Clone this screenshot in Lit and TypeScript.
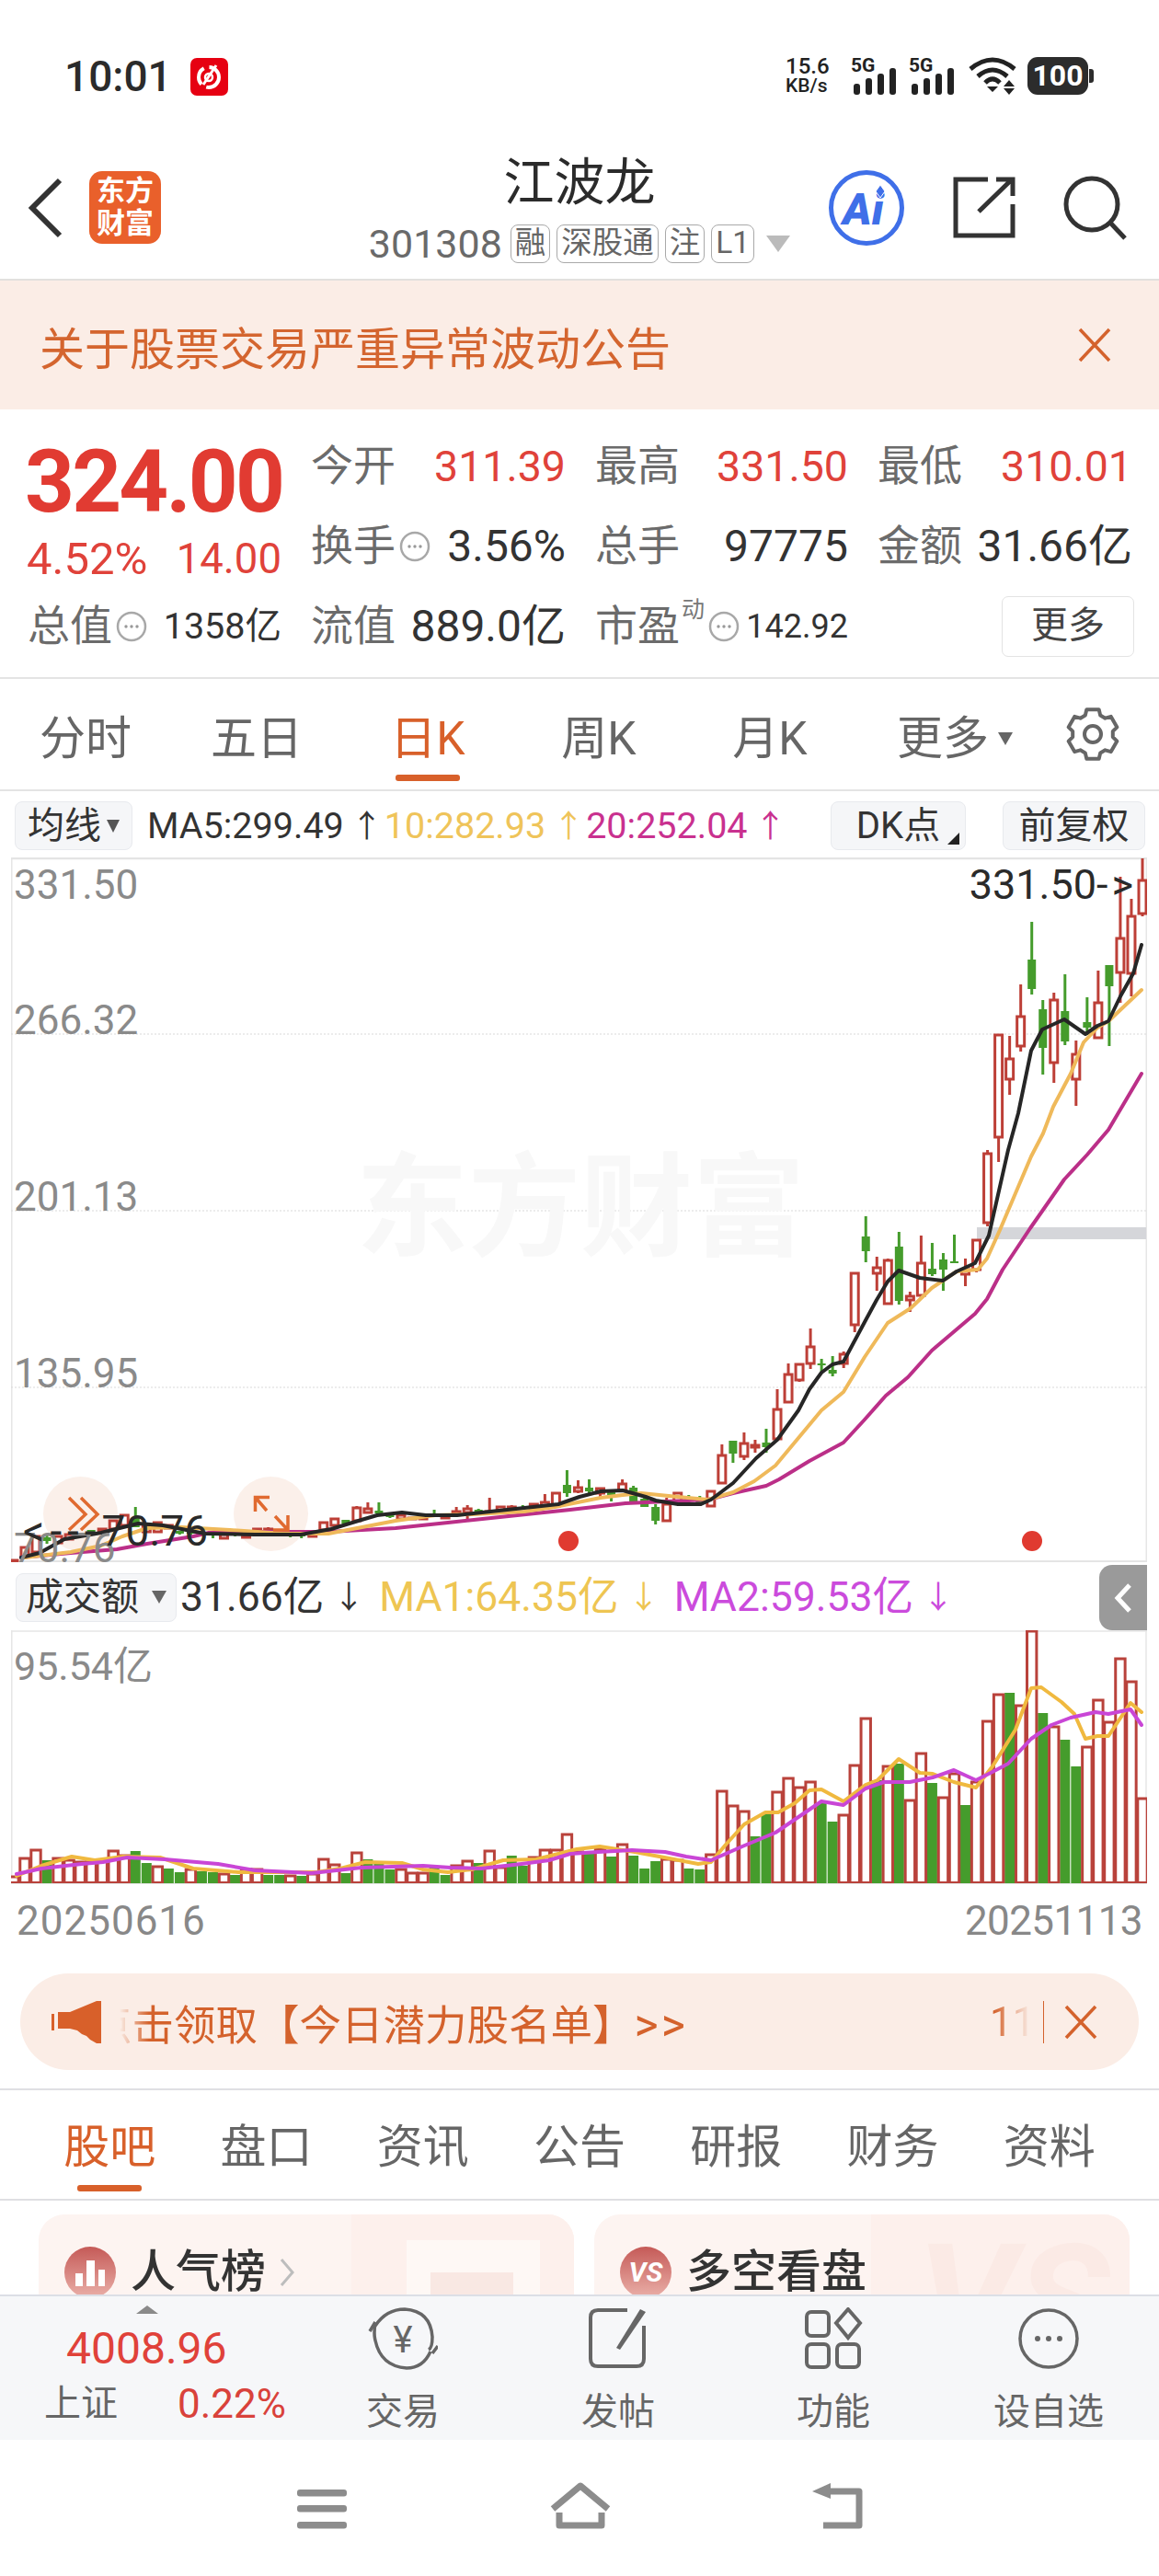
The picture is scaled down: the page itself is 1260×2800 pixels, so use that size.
// Stock detail page: quote header, K-line and volume charts, bottom bars.
import { LitElement, html, css, svg } from 'lit';
import { customElement } from 'lit/decorators.js';

type Candle = [number, number, number?, number?, string?];

// chart data is in page pixels, k = 0 is the newest day
const CANDLES: Candle[] = [
  [957, 993, 933, 996], [996, 1058, 977, 1083], [1020, 1057, 953, 1090], [1049, 1072, 1049, 1137, 'g'],
  [1090, 1128, 1055, 1128], [1111, 1117, 1084, 1125, 'g'], [1146, 1173, 1131, 1202], [1099, 1132, 1059, 1136, 'g'],
  [1087, 1155, 1079, 1177], [1097, 1139, 1087, 1168, 'g'], [1043, 1075, 1002, 1081, 'g'], [1105, 1137, 1070, 1143],
  [1151, 1173, 1126, 1190], [1125, 1236, 1125, 1263], [1254, 1329, 1250, 1333], [1348, 1380, 1348, 1383],
  [1380, 1385, 1368, 1398], [1371, 1373, 1342, 1373, 'g'], [1369, 1380, 1362, 1403, 'g'], [1379, 1385, 1351, 1387, 'g'],
  [1373, 1408, 1343, 1412], [1409, 1413, 1404, 1426], [1355, 1414, 1339, 1418, 'g'], [1370, 1417, 1368, 1417],
  [1378, 1384, 1366, 1403], [1344, 1360, 1322, 1372, 'g'], [1384, 1440, 1384, 1448], [1472, 1482, 1469, 1487],
  [1489, 1493, 1474, 1496, 'g'], [1482, 1484, 1477, 1491, 'g'], [1464, 1482, 1444, 1488], [1483, 1500, 1483, 1502],
  [1494, 1524, 1482, 1524], [1532, 1564, 1510, 1565], [1568, 1573, 1553, 1579, 'g'], [1571, 1573, 1565, 1579],
  [1569, 1583, 1557, 1587], [1566, 1580, 1566, 1590, 'g'], [1582, 1612, 1570, 1613], [1621, 1637],
  [1630, 1635, 1626, 1637, 'g'], [1627, 1631, 1625, 1635, 'g'], [1623, 1633], [1635, 1653, 1628, 1653],
  [1638, 1653, 1635, 1657, 'g'], [1629, 1638, 1625, 1638, 'g'], [1617, 1632, 1615, 1633, 'g'], [1613, 1620, 1608, 1621],
  [1622, 1627, 1620, 1632, 'g'], [1618, 1623, 1617, 1627], [1617, 1621, 1608, 1623, 'g'], [1617, 1621, 1609, 1623],
  [1614, 1623, 1598, 1627, 'g'], [1623, 1637], [1633, 1638, 1624, 1638], [1635, 1640],
  [1638, 1640, 1636, 1641, 'g'], [1638, 1642, 1636, 1642], [1638, 1643], [1643, 1644, 1628, 1645],
  [1641, 1644, 1640, 1645, 'g'], [1640, 1644, 1636, 1651], [1643, 1646, 1638, 1646], [1647, 1650],
  [1646, 1647, 1641, 1649, 'g'], [1650, 1651], [1650, 1651], [1647, 1651],
  [1646, 1649, 1646, 1650, 'g'], [1642, 1645, 1633, 1647, 'g'], [1640, 1644, 1633, 1645], [1639, 1653, 1637, 1653],
  [1652, 1656, 1652, 1658, 'g'], [1651, 1658], [1655, 1663], [1668, 1670],
  [1668, 1670, 1668, 1672, 'g'], [1668, 1670, 1668, 1671, 'g'], [1667, 1669, 1667, 1670, 'g'], [1662, 1666, 1660, 1666],
  [1662, 1665], [1668, 1671], [1667, 1669, 1667, 1670, 'g'], [1668, 1672],
  [1667, 1669, 1667, 1672, 'g'], [1665, 1667, 1665, 1668, 'g'], [1664, 1667, 1664, 1670, 'g'], [1664, 1667, 1664, 1668, 'g'],
  [1658, 1661], [1655, 1665], [1658, 1665], [1650, 1660, 1638, 1660, 'g'],
  [1647, 1658], [1653, 1662], [1662, 1664], [1663, 1665, 1663, 1666, 'g'],
  [1666, 1668, 1666, 1669, 'g'], [1668, 1673], [1670, 1677], [1671, 1675, 1668, 1678, 'g'],
  [1670, 1687], [1682, 1692], [1696, 1699],
];

const VOLUMES: [number, string?][] = [
  [1955], [1828], [1803], [1872], [1848], [1899], [1920, 'g'], [1891, 'g'], [1877], [1862, 'g'],
  [1773], [1854], [1840, 'g'], [1842], [1871], [1937], [1962, 'g'], [1928], [1954], [1938, 'g'],
  [1906], [1957], [1917, 'g'], [1920], [1935, 'g'], [1868], [1919], [1973], [1980, 'g'], [1960, 'g'],
  [1937], [1943], [1933], [1948], [1972, 'g'], [1996, 'g'], [1969], [1963], [1947], [2016],
  [2032, 'g'], [2031, 'g'], [2022], [2021], [2023, 'g'], [2031, 'g'], [2017, 'g'], [2005], [2018, 'g'], [2010],
  [2012, 'g'], [2013], [1994], [2011], [2011], [2019], [2028, 'g'], [2017, 'g'], [2030], [2012],
  [2025, 'g'], [2023], [2028], [2038, 'g'], [2030, 'g'], [2036], [2036], [2032], [2032, 'g'], [2026, 'g'],
  [2021, 'g'], [2014], [2036, 'g'], [2027], [2021], [2037], [2039, 'g'], [2039], [2038, 'g'], [2038, 'g'],
  [2032], [2032], [2038, 'g'], [2037], [2035, 'g'], [2034, 'g'], [2032], [2035, 'g'], [2031, 'g'], [2029],
  [2025, 'g'], [2012, 'g'], [2017], [2012], [2022], [2024], [2024], [2022], [2020], [2022, 'g'],
  [2011], [2020], [2040],
];

const MA5 = '23,1693 43,1688 70,1673 110,1666 150,1656 177,1658 223,1667 277,1668 327,1668 360,1662 393,1652 410,1647 437,1644 463,1647 497,1647 533,1643 570,1639 607,1635 630,1627 653,1621 677,1620 702,1627 713,1631 737,1635 762,1635 773,1630 797,1612 822,1585 845,1565 868,1533 880,1510 893,1492 905,1483 917,1480 940,1437 953,1413 965,1393 977,1381 1000,1389 1025,1392 1040,1382 1060,1373 1075,1343 1096,1250 1107,1210 1121,1142 1133,1119 1157,1108 1180,1124 1193,1115 1205,1110 1218,1083 1232,1058 1241,1027';
const MA10 = '27,1693 77,1687 110,1680 133,1670 160,1661 197,1660 250,1663 310,1667 357,1667 430,1653 473,1647 513,1646 570,1643 603,1638 653,1628 677,1625 697,1623 737,1627 770,1630 797,1622 820,1610 843,1593 868,1563 893,1533 917,1513 940,1475 965,1438 990,1422 1013,1400 1040,1382 1063,1380 1073,1368 1087,1337 1104,1297 1121,1257 1134,1232 1145,1203 1164,1167 1178,1133 1193,1117 1205,1110 1241,1076';
const MA20 = '23,1693 77,1688 127,1684 160,1678 210,1670 227,1666 277,1665 357,1665 430,1661 487,1655 553,1648 620,1641 680,1634 703,1633 770,1630 797,1623 833,1615 847,1608 880,1588 917,1568 940,1543 963,1517 987,1497 1013,1468 1060,1428 1073,1412 1090,1380 1120,1335 1134,1315 1157,1282 1182,1255 1205,1228 1241,1167';
const VMA1 = '18,2039 45,2028 78,2018 103,2022 134,2018 174,2019 210,2031 259,2035 312,2035 344,2035 370,2031 397,2024 437,2025 460,2032 487,2035 513,2032 547,2022 583,2021 627,2010 652,2007 690,2013 733,2021 759,2026 773,2024 789,2005 809,1983 832,1970 846,1970 864,1960 880,1946 893,1945 917,1958 941,1940 954,1935 977,1912 1000,1927 1014,1928 1037,1937 1061,1943 1079,1920 1104,1880 1121,1835 1132,1834 1154,1850 1168,1863 1180,1890 1193,1887 1205,1887 1229,1851 1241,1861';
const VMA2 = '18,2037 45,2031 89,2026 112,2024 138,2019 179,2021 237,2026 277,2033 339,2036 393,2030 460,2028 490,2030 523,2031 567,2026 597,2022 620,2015 650,2013 687,2011 723,2013 746,2018 773,2022 807,2007 843,1992 871,1973 893,1958 917,1962 941,1944 961,1937 989,1937 1014,1932 1037,1924 1061,1935 1075,1928 1096,1917 1121,1890 1143,1875 1164,1867 1191,1861 1205,1863 1229,1858 1241,1875';

const RED = '#bd3f37';
const GREEN = '#459c2c';
const xOf = (k: number) => 1242 - 12.03 * k;

// six rounded teeth around the centre of a 60 box
const gearPath = () => {
  const pts: string[] = [];
  for (let i = 0; i < 6; i++) {
    const a = (-90 + i * 60) * (Math.PI / 180);
    for (const [off, r] of [[-14, 27.5], [14, 27.5], [22, 22], [38, 22]]) {
      const t = a + (off * Math.PI) / 180;
      pts.push(`${(30 + r * Math.cos(t)).toFixed(1)} ${(30 + r * Math.sin(t)).toFixed(1)}`);
    }
  }
  return `M${pts.join(' L')} Z`;
};

const info = () => html`<svg class="info" width="34" height="34" viewBox="0 0 34 34">
  <circle cx="17" cy="17" r="15" fill="none" stroke="#a8a8a8" stroke-width="2.5" />
  <circle cx="11" cy="17" r="1.7" fill="#999" /><circle cx="17" cy="17" r="1.7" fill="#999" /><circle cx="23" cy="17" r="1.7" fill="#999" />
</svg>`;

const signal = () => html`<svg width="48" height="29" viewBox="0 0 48 29">
  <rect x="1" y="17" width="7" height="12" rx="3" fill="#222" /><rect x="14" y="11" width="7" height="18" rx="3" fill="#222" />
  <rect x="27" y="6" width="7" height="23" rx="3" fill="#222" /><rect x="40" y="0" width="7" height="29" rx="3" fill="#222" />
</svg>`;

const closeX = () => html`<svg class="x" width="38" height="38" viewBox="0 0 38 38">
  <path d="M3 2 L35 36 M35 2 L3 36" stroke="#d4622c" stroke-width="3.5" fill="none" />
</svg>`;

@customElement('app-root')
export class AppRoot extends LitElement {
  static override styles = css`
    :host {
      display: block;
      width: 1260px;
      height: 2800px;
      overflow: hidden;
      background: #fff;
      color: #333;
      font-family: Roboto, 'Noto Sans CJK SC', sans-serif;
    }
    svg { display: block; flex: none; }

    .status { height: 150px; display: flex; justify-content: space-between; align-items: flex-start; padding: 62px 77px 0 70px; box-sizing: border-box; }
    .status-left { display: flex; align-items: center; gap: 20px; }
    .time { font-size: 46px; line-height: 42px; font-weight: 500; color: #2b2b2b; }
    .status-right { display: flex; align-items: flex-start; }
    .speed { width: 62px; font-size: 21px; line-height: 21px; font-weight: 500; color: #222; text-align: left; }
    .speed b { display: block; font-size: 24px; font-weight: 500; }
    .net { position: relative; width: 63px; height: 41px; display: flex; align-items: flex-end; margin-left: 11px; }
    .net span { position: absolute; left: -2px; top: -1px; font-size: 21px; line-height: 21px; font-weight: 700; color: #222; }
    .net + .net { margin-left: 0; }
    .battery { position: relative; width: 66px; height: 41px; margin-left: 12px; border-radius: 11px; background: #2c2c2c; color: #fff; font-size: 32px; line-height: 41px; font-weight: 700; text-align: center; }
    .battery::after { content: ''; position: absolute; right: -6px; top: 13px; width: 5px; height: 15px; border-radius: 0 3px 3px 0; background: #2c2c2c; }

    .header { height: 155px; box-sizing: border-box; border-bottom: 2px solid #e2e0de; display: grid; grid-template-columns: 1fr 460px 1fr; align-items: flex-start; }
    .h-left { display: flex; align-items: center; padding: 36px 0 0 30px; gap: 27px; }
    .logo { width: 78px; height: 79px; border-radius: 14px; background: #e9602b; color: #fff; font-size: 31px; line-height: 35px; font-weight: 700; text-align: center; padding-top: 4px; box-sizing: border-box; }
    .h-center { display: flex; flex-direction: column; align-items: center; padding-top: 17px; }
    .title { font-size: 55px; line-height: 62px; color: #2b2b2b; }
    .sub { display: flex; align-items: center; gap: 7px; margin-top: 14px; font-size: 43px; line-height: 44px; color: #6a6a6a; }
    .tag { height: 42px; box-sizing: border-box; border: 1.5px solid #a9a9a9; border-radius: 8px; padding: 0 4px; font-size: 33.5px; line-height: 38px; color: #666; white-space: nowrap; }
    .sub .code { margin-right: 2px; }
    .sub svg { margin-left: 6px; }
    .h-right { display: flex; justify-content: flex-end; align-items: center; gap: 52px; padding: 34px 34px 0 0; }
    .h-right text { font: 900 italic 48px Roboto, sans-serif; fill: #3f6fe8; }

    .banner { height: 140px; background: #fbede6; display: flex; align-items: center; justify-content: space-between; padding: 0 51px 0 43px; font-size: 49px; color: #d4652f; }

    .quote { height: 293px; box-sizing: border-box; border-bottom: 2px solid #e4e4e4; padding: 18px 0 0 30px; display: grid; grid-template-columns: 276px 277px 275px 277px; column-gap: 32px; grid-template-rows: 87px 87px 87px; }
    .price { grid-row: 1 / span 2; display: flex; flex-direction: column; padding-top: 6px; }
    .big { font-size: 94px; line-height: 110px; font-weight: 700; color: #e13b32; letter-spacing: -2.8px; margin-left: -3px; white-space: nowrap; }
    .chg { display: flex; justify-content: space-between; align-items: center; margin-top: 5px; font-size: 45.5px; line-height: 48px; color: #e0423a; }
    .chg span:first-child { font-size: 49px; margin-left: -1px; }
    .cell { display: flex; align-items: center; justify-content: space-between; font-size: 48px; line-height: 54px; color: #333; }
    .lab { position: relative; top: -1px; color: #6b6b6b; font-size: 46px; white-space: nowrap; }
    .up { color: #e0423a; font-size: 46.5px; }
    .lab-wrap { display: flex; align-items: center; gap: 4px; }
    .small { font-size: 39.5px; }
    .tiny { font-size: 36px; }
    .sup { font-size: 25px; line-height: 25px; color: #777; align-self: flex-start; margin-left: -2px; position: relative; top: -4px; }
    .more { justify-self: end; align-self: center; width: 144px; height: 66px; box-sizing: border-box; border: 1.5px solid #e3e3e3; border-radius: 7px; font-size: 40px; line-height: 62px; text-align: center; color: #444; margin-right: -2px; }

    .ktabs { height: 122px; box-sizing: border-box; border-bottom: 2px solid #e4e4e4; display: grid; grid-template-columns: repeat(5, 186px) 216px 1fr; align-items: center; padding-top: 10px; font-size: 50px; color: #666; }
    .ktabs > div { position: relative; display: flex; justify-content: center; align-items: center; gap: 10px; line-height: 60px; }
    .ktabs .on { color: #d8602a; }
    .ktabs .on::after { content: ''; position: absolute; left: 58px; bottom: -16px; width: 70px; height: 7px; border-radius: 3px; background: #d8602a; }
    .ktabs .gear { justify-content: flex-start; padding-left: 12px; position: relative; top: -5px; }
    .tri { width: 0; height: 0; border-left: 8px solid transparent; border-right: 8px solid transparent; border-top: 14px solid #666; }

    .marow { height: 72px; display: flex; align-items: center; font-size: 39.5px; line-height: 50px; padding-top: 3px; box-sizing: border-box; color: #333; white-space: nowrap; }
    .pick { flex: none; height: 53px; box-sizing: border-box; border: 1.5px solid #e8eaee; border-radius: 8px; background: #f5f6f8; display: flex; align-items: center; justify-content: center; gap: 6px; color: #333; font-size: 40px; position: relative; }
    .arrow { flex: none; width: 24px; margin-left: 8px; font-size: 34px; text-align: center; }
    .volrow .arrow { width: 30px; margin-left: 10px; }
    .ma10, .ma10a { color: #efc45a; }
    .ma20, .ma20a { color: #c9318f; }
    .ma10, .ma20 { margin-left: 12px; }
    .pick.a { width: 128px; margin: 0 16px; }
    .pick.a .tri { border-top-color: #555; border-left-width: 7px; border-right-width: 7px; }
    .pick.dk { width: 147px; margin-left: auto; }
    .pick.dk::after { content: ''; position: absolute; right: 6px; bottom: 5px; border-left: 13px solid transparent; border-bottom: 13px solid #222; }
    .pick.fq { width: 155px; margin: 0 15px 0 40px; }

    .chart { position: relative; height: 766px; width: 1235px; margin-left: 12px; }
    .label { position: absolute; left: 3px; font-size: 44px; line-height: 44px; color: #8a8a8a; white-space: nowrap; }
    .label.dark { color: #2a2a2a; }
    .label.flow { font-size: 46px; left: 13px; }
    .label.end { left: auto; right: 11px; font-size: 45px; }
    .label.end i { font-style: normal; letter-spacing: 4px; }
    .dashes { letter-spacing: 6px; }
    .mark { position: absolute; left: 375px; top: 312px; font-size: 122px; line-height: 140px; font-weight: 700; color: #f8f8f8; white-space: nowrap; }

    .volrow { position: relative; height: 74px; display: flex; align-items: center; font-size: 44.5px; line-height: 50px; padding-top: 2px; box-sizing: border-box; white-space: nowrap; color: #333; }
    .pick.vol { width: 175px; height: 53px; margin: 0 4px 0 17px; font-size: 41px; gap: 14px; }
    .pick.vol .tri { border-top-color: #666; }
    .m1, .m1a { color: #eec552; }
    .m2, .m2a { color: #cb4bdc; }
    .m1 { margin-left: 20px; }
    .m2 { margin-left: 20px; }
    .side { position: absolute; right: 13px; top: 3px; width: 52px; height: 71px; border-radius: 14px 0 0 14px; background: #9a9a9a; display: flex; align-items: center; justify-content: center; }

    .volchart { position: relative; height: 276px; width: 1235px; margin-left: 12px; }
    .volchart .label { font-size: 43px; line-height: 43px; top: 18px; left: 3px; }
    .dates { height: 97px; display: flex; justify-content: space-between; padding: 15px 18px 0 18px; box-sizing: border-box; font-size: 44px; line-height: 50px; color: #888; }
    .dates span:first-child { letter-spacing: 1px; }
    .dates span:last-child { letter-spacing: -0.6px; }

    .promo { height: 105px; margin: 0 22px 20px; border-radius: 53px; background: #fbede6; display: flex; align-items: center; padding-left: 34px; color: #d4622c; font-size: 45.5px; }
    .scroll { width: 632px; margin-left: 20px; overflow: hidden; white-space: nowrap; -webkit-mask-image: linear-gradient(90deg, transparent, #000 32px); mask-image: linear-gradient(90deg, transparent, #000 32px); }
    .scroll span { display: inline-block; margin-left: -32px; }
    .scroll b { font-weight: 400; font-size: 50px; letter-spacing: 3px; }
    .count { width: 44px; margin-left: 314px; white-space: nowrap; overflow: hidden; font-size: 44px; -webkit-mask-image: linear-gradient(90deg, #000 10%, transparent); mask-image: linear-gradient(90deg, #000 10%, transparent); }
    .sep { width: 1px; height: 46px; background: #d4622c; margin-left: 14px; }
    .promo .x { margin-left: 21px; }

    .ptabs { height: 122px; box-sizing: border-box; border-top: 2px solid #dfdfe3; border-bottom: 2px solid #dfdfe3; display: grid; grid-template-columns: repeat(7, 1fr); padding: 0 34px; align-items: center; font-size: 50px; color: #666; text-align: center; }
    .ptabs div { position: relative; line-height: 60px; top: 3px; }
    .ptabs .on { color: #d8602a; }
    .ptabs .on::after { content: ''; position: absolute; left: 50px; bottom: -18px; width: 70px; height: 7px; border-radius: 3px; background: #d8602a; }

    .cards { height: 102px; overflow: hidden; display: flex; gap: 22px; padding: 15px 32px 0 42px; box-sizing: border-box; }
    .card { position: relative; flex: 1; height: 160px; overflow: hidden; border-radius: 28px 28px 0 0; background: #fdf4f1; }
    .card .head { position: relative; display: flex; align-items: center; padding: 33px 0 0 28px; font-size: 49px; line-height: 60px; font-weight: 500; color: #333; }
    .chev { margin-left: 14px; }
    .badge { width: 56px; height: 56px; border-radius: 50%; background: linear-gradient(#c55a57, #eab0a9); margin-right: 16px; color: #fff; font-size: 30px; line-height: 56px; font-weight: 700; font-style: italic; text-align: center; display: flex; align-items: center; justify-content: center; }
    .panel { position: absolute; top: 0; right: 0; bottom: 0; width: 242px; background: #fdf0ec; }
    .panel.wide { width: 281px; }
    .panel i { position: absolute; left: 60px; top: 28px; width: 145px; height: 100px; background: #fef8f5; }
    .panel b { position: absolute; left: 86px; top: 63px; width: 90px; height: 60px; background: #f9e8e3; }
    .bigvs { position: absolute; left: 50px; top: 10px; font-size: 170px; line-height: 170px; font-weight: 700; font-style: italic; color: #fbeae5; }

    .bar { height: 158px; box-sizing: border-box; background: #f6f7f9; border-top: 2px solid #dcdfe6; display: flex; }
    .index { position: relative; width: 321px; box-sizing: border-box; padding: 0 10px 0 48px; display: flex; flex-direction: column; }
    .index .tri { position: absolute; left: 148px; top: 10px; border-top: none; border-bottom: 9px solid #8a8a8a; border-left-width: 12px; border-right-width: 12px; }
    .idx { margin-top: 32px; padding-left: 24px; font-size: 48px; line-height: 50px; color: #e0423a; }
    .idx-row { display: flex; justify-content: space-between; align-items: center; margin-top: 10px; font-size: 40px; line-height: 50px; color: #666; }
    .idx-row span:last-child { color: #d9423b; font-size: 44px; }
    .tool { width: 234px; display: flex; flex-direction: column; align-items: center; padding-top: 12px; box-sizing: border-box; font-size: 40px; line-height: 50px; color: #666; }
    .tool svg { margin-bottom: 21px; }

    .nav { height: 148px; display: flex; }
    .nav svg { width: 1260px; height: 148px; }
  `;

  private renderCandles() {
    return CANDLES.map(([top, bottom, high, low, c], k) => {
      const x = xOf(k);
      const color = c === 'g' ? GREEN : RED;
      const hi = high ?? top;
      const lo = low ?? bottom;
      return svg`
        ${hi < top ? svg`<line x1=${x} x2=${x} y1=${hi} y2=${top} stroke=${color} stroke-width="3" />` : ''}
        ${lo > bottom ? svg`<line x1=${x} x2=${x} y1=${bottom} y2=${lo} stroke=${color} stroke-width="3" />` : ''}
        ${c === 'g'
          ? svg`<rect x=${x - 4.5} y=${top} width="9" height=${Math.max(bottom - top, 2)} fill=${color} />`
          : svg`<rect x=${x - 4} y=${top} width="8" height=${bottom - top} fill="#fff" stroke=${color} stroke-width="3" />`}
      `;
    });
  }

  private renderVolumes() {
    const bars = VOLUMES.map(([top, c], k) => ({ top, c, x: xOf(k) }));
    return svg`
      ${bars.filter((b) => b.c === 'g').map((b) => svg`<rect x=${b.x - 5.5} y=${b.top} width="11" height=${2048 - b.top} fill=${GREEN} />`)}
      ${bars.filter((b) => b.c !== 'g').map((b) => svg`<rect x=${b.x - 5.2} y=${b.top} width="10.4" height=${2046.5 - b.top} fill="#fff" fill-opacity="0.9" stroke="#b9423b" stroke-width="3" />`)}
    `;
  }

  private renderPriceChart() {
    return html`<svg class="plot" width="1235" height="766" viewBox="12 932 1235 766">
      <rect x="12.75" y="933" width="1233.5" height="764" fill="none" stroke="#e6e6e6" stroke-width="1.5" />
      <path d="M12 1697.5 H1247 M12 933 H1247" stroke="#e4e4e4" stroke-width="2.5" />
      ${[1124, 1316, 1508].map((y) => svg`<line x1="12" x2="1247" y1=${y} y2=${y} stroke="#d9d9d9" stroke-width="1" stroke-dasharray="2 2" />`)}
      <rect x="1062" y="1334" width="184" height="13" fill="#d5d6da" />
      <circle cx="87.5" cy="1645.5" r="40.5" fill="#fbf0ea" />
      <circle cx="294.5" cy="1645.5" r="40.5" fill="#fbf0ea" />
      ${this.renderCandles()}
      <polyline points=${MA20} fill="none" stroke="#bb2f88" stroke-width="4" stroke-linejoin="round" stroke-linecap="round" />
      <polyline points=${MA10} fill="none" stroke="#efb95a" stroke-width="4" stroke-linejoin="round" stroke-linecap="round" />
      <polyline points=${MA5} fill="none" stroke="#262626" stroke-width="4" stroke-linejoin="round" stroke-linecap="round" />
      <g fill="none" stroke="#e06a30" stroke-width="3.5">
        <path d="M75 1628 L93 1646 L75 1663 M88 1628 L106 1646 L88 1663" />
        <path d="M293 1627.5 H277.5 V1643 M277.5 1627.5 L290 1642 M297 1663 H313 V1647 M313 1663 L299 1648" />
      </g>
      <circle cx="618" cy="1675" r="11" fill="#e03a30" />
      <circle cx="1122" cy="1675" r="11" fill="#e03a30" />
    </svg>`;
  }

  private renderVolChart() {
    return html`<svg width="1235" height="276" viewBox="12 1772 1235 276">
      <path d="M12 1773 H1247 M12.75 1772 V2048 M1246 1772 V2048" stroke="#e6e6e6" stroke-width="1.5" fill="none" />
      ${this.renderVolumes()}
      <path d="M12 2047.5 H1247" stroke="#e4e4e4" stroke-width="1" />
      <polyline points=${VMA1} fill="none" stroke="#f0b93f" stroke-width="4" stroke-linejoin="round" stroke-linecap="round" />
      <polyline points=${VMA2} fill="none" stroke="#c946d6" stroke-width="4" stroke-linejoin="round" stroke-linecap="round" />
    </svg>`;
  }

  override render() {
    return html`
      <div class="status">
        <div class="status-left">
          <span class="time">10:01</span>
          <svg width="41" height="41" viewBox="0 0 41 41">
            <rect width="41" height="41" rx="7" fill="#e60012" />
            <circle cx="20" cy="21" r="11" fill="none" stroke="#fff" stroke-width="4" stroke-dasharray="20 6" />
            <path d="M14 29 L28 8" stroke="#fff" stroke-width="3" />
            <circle cx="20" cy="21" r="4" fill="none" stroke="#fff" stroke-width="2.5" />
          </svg>
        </div>
        <div class="status-right">
          <div class="speed"><b>15.6</b>KB/s</div>
          <div class="net"><span>5G</span>${signal()}</div>
          <div class="net"><span>5G</span>${signal()}</div>
          <svg width="52" height="41" viewBox="0 0 52 41">
            <path d="M2 13 Q26 -7 50 13 M10 21 Q26 7 42 21 M18 28 Q26 20 34 28" fill="none" stroke="#222" stroke-width="5" />
            <path d="M20 32 H32 L26 38 Z M38 34 H50 L44 41 Z M38 32 L44 25 L50 32 Z" fill="#222" />
          </svg>
          <div class="battery">100</div>
        </div>
      </div>

      <div class="header">
        <div class="h-left">
          <svg width="40" height="66" viewBox="0 0 40 66"><path d="M35 3 L5 33 L35 63" fill="none" stroke="#333" stroke-width="6" /></svg>
          <div class="logo">东方<br />财富</div>
        </div>
        <div class="h-center">
          <div class="title">江波龙</div>
          <div class="sub">
            <span class="code">301308</span>
            <span class="tag">融</span><span class="tag">深股通</span><span class="tag">注</span><span class="tag">L1</span>
            <svg width="26" height="18" viewBox="0 0 26 18"><path d="M0 0 H26 L13 18 Z" fill="#bbb" /></svg>
          </div>
        </div>
        <div class="h-right">
          <svg width="84" height="84" viewBox="0 0 84 84">
            <circle cx="42" cy="42" r="38.5" fill="none" stroke="#3f6fe8" stroke-width="5" />
            <text x="16" y="60">Ai</text>
            <path d="M57 17 L62 24 L57 31 L52 24 Z" fill="#3f6fe8" stroke="#fff" stroke-width="1" />
          </svg>
          <svg width="68" height="68" viewBox="0 0 68 68">
            <path d="M38 3 H3 V64 H65 V30 M28 38 L63 4 M47 3 H65 V21" fill="none" stroke="#333" stroke-width="5" />
          </svg>
          <svg width="70" height="70" viewBox="0 0 70 70">
            <circle cx="31" cy="31" r="28" fill="none" stroke="#333" stroke-width="5" />
            <path d="M51 51 L67 68" stroke="#333" stroke-width="5" />
          </svg>
        </div>
      </div>

      <div class="banner"><span>关于股票交易严重异常波动公告</span>${closeX()}</div>

      <div class="quote">
        <div class="price">
          <div class="big">324.00</div>
          <div class="chg"><span>4.52%</span><span>14.00</span></div>
        </div>
        <div class="cell"><span class="lab">今开</span><span class="up">311.39</span></div>
        <div class="cell"><span class="lab">最高</span><span class="up">331.50</span></div>
        <div class="cell"><span class="lab">最低</span><span class="up">310.01</span></div>
        <div class="cell"><span class="lab-wrap"><span class="lab">换手</span>${info()}</span><span>3.56%</span></div>
        <div class="cell"><span class="lab">总手</span><span>97775</span></div>
        <div class="cell"><span class="lab">金额</span><span>31.66亿</span></div>
        <div class="cell"><span class="lab-wrap"><span class="lab">总值</span>${info()}</span><span class="small">1358亿</span></div>
        <div class="cell"><span class="lab">流值</span><span>889.0亿</span></div>
        <div class="cell"><span class="lab-wrap"><span class="lab">市盈</span><span class="sup">动</span>${info()}</span><span class="tiny">142.92</span></div>
        <div class="more">更多</div>
      </div>

      <div class="ktabs">
        <div>分时</div><div>五日</div><div class="on">日K</div><div>周K</div><div>月K</div>
        <div>更多<span class="tri"></span></div>
        <div class="gear">
          <svg width="60" height="60" viewBox="0 0 60 60">
            <path d=${gearPath()} fill="none" stroke="#666" stroke-width="4" stroke-linejoin="round" />
            <circle cx="30" cy="30" r="9" fill="none" stroke="#666" stroke-width="4" />
          </svg>
        </div>
      </div>

      <div class="marow">
        <div class="pick a">均线<span class="tri"></span></div>
        <span>MA5:299.49</span><span class="arrow">↑</span>
        <span class="ma10">10:282.93</span><span class="arrow ma10a">↑</span>
        <span class="ma20">20:252.04</span><span class="arrow ma20a">↑</span>
        <div class="pick dk">DK点</div>
        <div class="pick fq">前复权</div>
      </div>

      <div class="chart">
        <div class="mark">东方财富</div>
        ${this.renderPriceChart()}
        ${[['331.50', 8], ['266.32', 155], ['201.13', 347], ['135.95', 539], ['70.76', 729]].map(
          ([t, y]) => html`<span class="label" style="top:${y}px">${t}</span>`,
        )}
        <span class="label dark flow" style="top:710px"><span class="dashes">&lt;---</span>70.76</span>
        <span class="label dark end" style="top:8px">331.50<i>-&gt;</i></span>
      </div>

      <div class="volrow">
        <div class="pick vol">成交额<span class="tri"></span></div>
        <span>31.66亿</span><span class="arrow">↓</span>
        <span class="m1">MA1:64.35亿</span><span class="arrow m1a">↓</span>
        <span class="m2">MA2:59.53亿</span><span class="arrow m2a">↓</span>
        <div class="side">
          <svg width="20" height="34" viewBox="0 0 20 34"><path d="M17 3 L4 17 L17 31" fill="none" stroke="#fff" stroke-width="5" /></svg>
        </div>
      </div>

      <div class="volchart">
        ${this.renderVolChart()}
        <span class="label">95.54亿</span>
      </div>

      <div class="dates"><span>20250616</span><span>20251113</span></div>

      <div class="promo">
        <svg width="54" height="46" viewBox="0 0 54 46">
          <path d="M0 14 H3 V32 H0 Z M7 12 H20 L49 0 H54 V46 H49 L42 42 L38 38 L33 36 L28 32 L20 30 H7 Z" fill="#d8602a" />
        </svg>
        <div class="scroll"><span>点击领取【今日潜力股名单】<b>&gt;&gt;</b></span></div>
        <div class="count">11</div>
        <div class="sep"></div>
        ${closeX()}
      </div>

      <div class="ptabs">
        <div class="on">股吧</div><div>盘口</div><div>资讯</div><div>公告</div><div>研报</div><div>财务</div><div>资料</div>
      </div>

      <div class="cards">
        <div class="card">
          <div class="panel"><i></i><b></b></div>
          <div class="head">
            <span class="badge">
              <svg width="34" height="30" viewBox="0 0 34 30">
                <rect x="1" y="16" width="8" height="14" fill="#fff" /><rect x="13" y="2" width="9" height="28" fill="#fff" /><rect x="26" y="12" width="7" height="18" fill="#fff" />
              </svg>
            </span>
            人气榜
            <svg width="18" height="34" viewBox="0 0 18 34" class="chev"><path d="M3 3 L15 17 L3 31" fill="none" stroke="#bdbdbd" stroke-width="3" /></svg>
          </div>
        </div>
        <div class="card">
          <div class="panel wide"><span class="bigvs">VS</span></div>
          <div class="head"><span class="badge">VS</span>多空看盘</div>
        </div>
      </div>

      <div class="bar">
        <div class="index">
          <span class="tri"></span>
          <div class="idx">4008.96</div>
          <div class="idx-row"><span>上证</span><span>0.22%</span></div>
        </div>
        <div class="tool">
          <svg width="76" height="68" viewBox="0 0 76 68">
            <path d="M8 20 Q20 2 40 2 Q68 4 70 32 Q70 44 66 46 M68 48 Q60 66 42 66 Q14 64 8 36 Q6 28 8 18" fill="none" stroke="#666" stroke-width="3.5" />
            <path d="M8 16 L2 26 M70 50 L76 42" stroke="#666" stroke-width="3.5" />
            <text x="38" y="49" text-anchor="middle" font-size="40" fill="#666" font-family="Roboto, sans-serif">¥</text>
          </svg>
          交易
        </div>
        <div class="tool">
          <svg width="68" height="68" viewBox="0 0 68 68">
            <path d="M44 3 H12 Q4 3 4 11 V56 Q4 64 12 64 H54 Q62 64 62 56 V20" fill="none" stroke="#666" stroke-width="4" />
            <path d="M58 2 L64 5 L36 46 L32 44 Z" fill="#666" />
          </svg>
          发帖
        </div>
        <div class="tool">
          <svg width="68" height="68" viewBox="0 0 68 68">
            <rect x="5" y="5" width="24" height="26" rx="5" fill="none" stroke="#666" stroke-width="4" />
            <path d="M50 2 L63 17 L50 33 L37 17 Z" fill="none" stroke="#666" stroke-width="4" />
            <rect x="5" y="40" width="24" height="25" rx="5" fill="none" stroke="#666" stroke-width="4" />
            <rect x="38" y="40" width="24" height="25" rx="5" fill="none" stroke="#666" stroke-width="4" />
          </svg>
          功能
        </div>
        <div class="tool">
          <svg width="68" height="68" viewBox="0 0 68 68">
            <circle cx="34" cy="34" r="31" fill="none" stroke="#666" stroke-width="3.5" />
            <circle cx="22" cy="34" r="3" fill="#666" /><circle cx="34" cy="34" r="3" fill="#666" /><circle cx="46" cy="34" r="3" fill="#666" />
          </svg>
          设自选
        </div>
      </div>

      <div class="nav">
        <svg viewBox="0 2652 1260 148">
          <g fill="#8c8c8c">
            <rect x="323" y="2706" width="54" height="7.5" rx="3" /><rect x="323" y="2723" width="54" height="7.5" rx="3" /><rect x="323" y="2741" width="54" height="7.5" rx="3" />
          </g>
          <g fill="none" stroke="#8c8c8c" stroke-width="7" stroke-linejoin="round">
            <path d="M601 2727 L631 2702 L661 2727" />
            <path d="M608 2731 V2745 H654 V2731" />
            <path d="M900 2708 H934 V2745 H895" />
          </g>
          <path d="M883 2708 L903 2699 V2716 Z" fill="#8c8c8c" />
        </svg>
      </div>
    `;
  }
}
